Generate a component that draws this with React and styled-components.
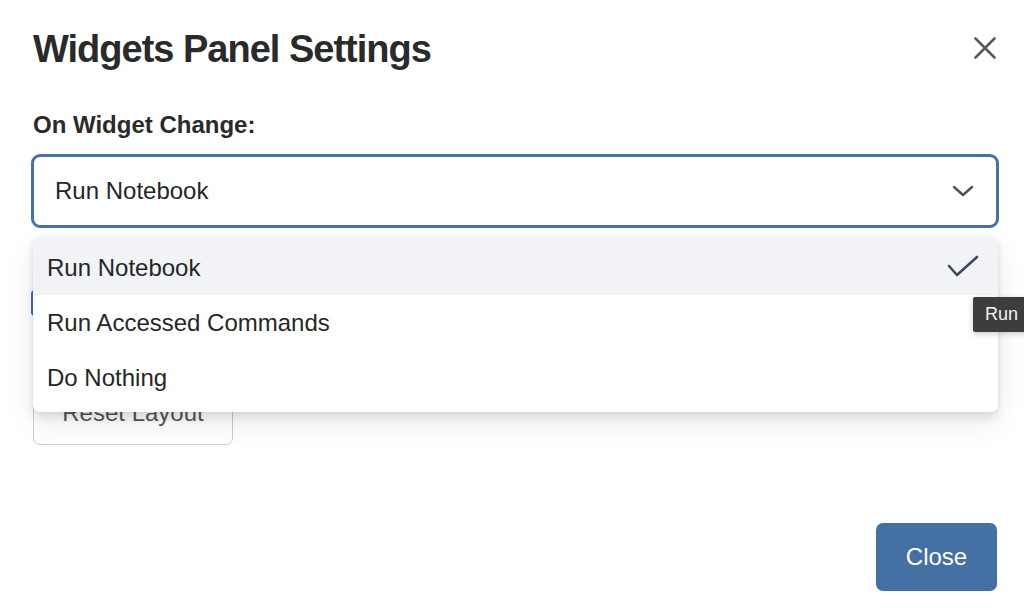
import React from "react";
import styled, { createGlobalStyle } from "styled-components";

const Global = createGlobalStyle`
  html, body { margin: 0; padding: 0; background: #ffffff; }
  body { font-family: "Liberation Sans", Arial, sans-serif; color: #242424; }
  * { box-sizing: border-box; }
`;

const Page = styled.div`
  position: relative;
  width: 1024px;
  height: 614px;
  overflow: hidden;
  background: #ffffff;
  display: flex;
  flex-direction: column;
`;

const Header = styled.div`
  display: flex;
  align-items: center;
  justify-content: space-between;
  padding: 26px 24px 0 33px;
`;

const Title = styled.h1`
  margin: 0;
  font-size: 38px;
  line-height: 46px;
  font-weight: 700;
  letter-spacing: -1px;
  color: #2a2a2a;
`;

const IconButton = styled.button`
  border: none;
  background: transparent;
  padding: 0;
  width: 30px;
  height: 30px;
  display: flex;
  align-items: center;
  justify-content: center;
  color: #555a60;
  margin-top: -2px;
`;

const Body = styled.div`
  display: flex;
  flex-direction: column;
  padding: 0 25px 0 31px;
`;

const Label = styled.label`
  margin: 38px 0 0 2px;
  font-size: 24px;
  line-height: 30px;
  font-weight: 700;
  color: #2a2a2a;
`;

const SelectWrap = styled.div`
  position: relative;
  margin-top: 14px;
`;

const SelectBox = styled.div`
  height: 74px;
  border: 3px solid #4672a8;
  border-radius: 9px;
  display: flex;
  align-items: center;
  justify-content: space-between;
  padding: 0 22px 0 21px;
  font-size: 24px;
  color: #262626;
  background: #fff;
`;

const Menu = styled.ul`
  position: absolute;
  top: 83px;
  left: 2px;
  right: 1px;
  margin: 0;
  padding: 0 0 7px;
  list-style: none;
  background: #ffffff;
  border-radius: 7px;
  overflow: hidden;
  box-shadow: 0 6px 10px rgba(0, 0, 0, 0.09), 0 12px 30px rgba(0, 0, 0, 0.08),
    0 0 5px rgba(0, 0, 0, 0.06);
  z-index: 2;
`;

const MenuItem = styled.li`
  height: ${(p) => (p.$first ? "58px" : "55px")};
  padding: ${(p) => (p.$first ? "3px 19px 0 14px" : "0 19px 0 14px")};
  display: flex;
  align-items: center;
  justify-content: space-between;
  font-size: 24px;
  color: #262626;
  background: ${(p) => (p.$active ? "#f1f3f7" : "#ffffff")};
`;

const CheckRow = styled.div`
  margin-top: 62px;
  display: flex;
  align-items: center;
  height: 26px;
`;

const Checkbox = styled.span`
  width: 24px;
  height: 26px;
  border: 2px solid #3f6fb0;
  border-radius: 4px;
  background: #fff;
`;

const ResetButton = styled.button`
  margin: 65px 0 0 2px;
  width: 200px;
  height: 64px;
  border: 1.5px solid #cacdd2;
  border-radius: 7px;
  background: #ffffff;
  font-family: "Liberation Sans", Arial, sans-serif;
  font-size: 24px;
  color: #555555;
`;

const Footer = styled.div`
  display: flex;
  justify-content: flex-end;
  padding: 0 27px 0 0;
  margin-top: 78px;
`;

const PrimaryButton = styled.button`
  width: 121px;
  height: 68px;
  border: none;
  border-radius: 7px;
  background: #4470a4;
  color: #ffffff;
  font-family: "Liberation Sans", Arial, sans-serif;
  font-size: 24px;
`;

const Tooltip = styled.div`
  position: absolute;
  left: 973px;
  top: 297px;
  height: 35px;
  padding: 0 12px;
  display: flex;
  align-items: center;
  background: #3d3d3d;
  color: #f2f2f2;
  font-size: 18px;
  border-radius: 2px;
  box-shadow: 0 2px 6px rgba(0, 0, 0, 0.2);
  z-index: 3;
`;

const CloseIcon = () => (
  <svg width="24" height="24" viewBox="0 0 24 24" fill="none">
    <path d="M2.5 2.5 L21.5 21.5 M21.5 2.5 L2.5 21.5" stroke="currentColor" strokeWidth="2.6" strokeLinecap="round" />
  </svg>
);

const Chevron = () => (
  <svg width="22" height="12" viewBox="0 0 22 12" fill="none">
    <path d="M2 2 L11 10 L20 2" stroke="#4f5357" strokeWidth="2.4" strokeLinecap="round" strokeLinejoin="round" />
  </svg>
);

const Check = () => (
  <svg width="32" height="26" viewBox="0 0 32 26" fill="none">
    <path d="M2 11 L10 20 L30 2" stroke="#3e4a5c" strokeWidth="2.6" strokeLinecap="round" strokeLinejoin="round" />
  </svg>
);

const options = ["Run Notebook", "Run Accessed Commands", "Do Nothing"];

export default function App() {
  return (
    <Page>
      <Global />
      <Header>
        <Title>Widgets Panel Settings</Title>
        <IconButton aria-label="Close">
          <CloseIcon />
        </IconButton>
      </Header>
      <Body>
        <Label>On Widget Change:</Label>
        <SelectWrap>
          <SelectBox>
            <span>Run Notebook</span>
            <Chevron />
          </SelectBox>
          <Menu>
            {options.map((o, i) => (
              <MenuItem key={o} $active={i === 0} $first={i === 0}>
                <span>{o}</span>
                {i === 0 && <Check />}
              </MenuItem>
            ))}
          </Menu>
        </SelectWrap>
        <CheckRow>
          <Checkbox />
        </CheckRow>
        <div>
          <ResetButton>Reset Layout</ResetButton>
        </div>
      </Body>
      <Footer>
        <PrimaryButton>Close</PrimaryButton>
      </Footer>
      <Tooltip>Run</Tooltip>
    </Page>
  );
}
